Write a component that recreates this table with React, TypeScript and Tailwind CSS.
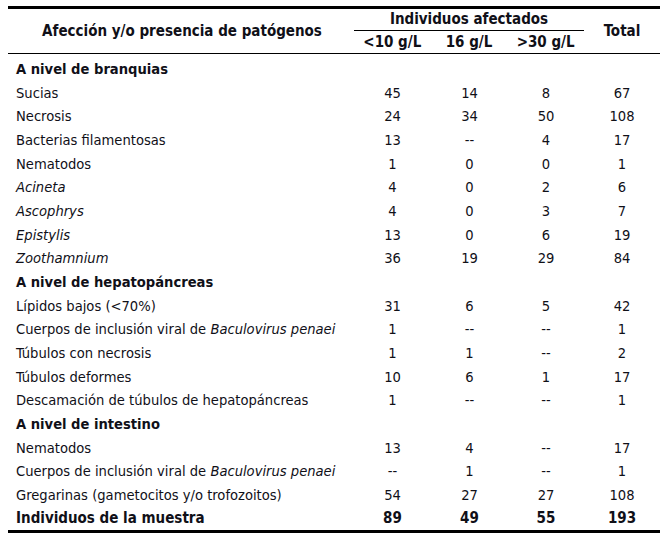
import React from "react";

type Row =
  | { kind: "section"; label: string }
  | { kind: "data"; label: React.ReactNode; v: string[]; bold?: boolean };

const rows: Row[] = [
  { kind: "section", label: "A nivel de branquias" },
  { kind: "data", label: "Sucias", v: ["45", "14", "8", "67"] },
  { kind: "data", label: "Necrosis", v: ["24", "34", "50", "108"] },
  { kind: "data", label: "Bacterias filamentosas", v: ["13", "--", "4", "17"] },
  { kind: "data", label: "Nematodos", v: ["1", "0", "0", "1"] },
  { kind: "data", label: <i>Acineta</i>, v: ["4", "0", "2", "6"] },
  { kind: "data", label: <i>Ascophrys</i>, v: ["4", "0", "3", "7"] },
  { kind: "data", label: <i>Epistylis</i>, v: ["13", "0", "6", "19"] },
  { kind: "data", label: <i>Zoothamnium</i>, v: ["36", "19", "29", "84"] },
  { kind: "section", label: "A nivel de hepatopáncreas" },
  { kind: "data", label: "Lípidos bajos (<70%)", v: ["31", "6", "5", "42"] },
  {
    kind: "data",
    label: (
      <>
        Cuerpos de inclusión viral de <i>Baculovirus penaei</i>
      </>
    ),
    v: ["1", "--", "--", "1"],
  },
  { kind: "data", label: "Túbulos con necrosis", v: ["1", "1", "--", "2"] },
  { kind: "data", label: "Túbulos deformes", v: ["10", "6", "1", "17"] },
  { kind: "data", label: "Descamación de túbulos de hepatopáncreas", v: ["1", "--", "--", "1"] },
  { kind: "section", label: "A nivel de intestino" },
  { kind: "data", label: "Nematodos", v: ["13", "4", "--", "17"] },
  {
    kind: "data",
    label: (
      <>
        Cuerpos de inclusión viral de <i>Baculovirus penaei</i>
      </>
    ),
    v: ["--", "1", "--", "1"],
  },
  { kind: "data", label: "Gregarinas (gametocitos y/o trofozoitos)", v: ["54", "27", "27", "108"] },
  { kind: "data", label: "Individuos de la muestra", v: ["89", "49", "55", "193"], bold: true },
];

const grid = "grid grid-cols-[346px_77px_77px_76px_76px]";

export default function App() {
  return (
    <div
      className="w-[671px] h-[543px] bg-white pt-[6px] pl-[8px] text-[14.6px] text-[#101018] [font-stretch:condensed]"
      style={{ fontFamily: '"DejaVu Sans Condensed", "DejaVu Sans", sans-serif' }}
    >
      <div className="w-[652px] border-t-[3px] border-b-[3px] border-black">
        {/* header */}
        <div className={`${grid} h-[45px] border-b border-black font-bold text-[15px]`}>
          <div className="flex items-center justify-center pl-[2px]">Afección y/o presencia de patógenos</div>
          <div className="col-span-3 flex flex-col">
            <div className="h-[22px] flex items-center justify-center border-b border-black">
              Individuos afectados
            </div>
            <div className="grid grid-cols-3 flex-1">
              <div className="flex items-center justify-center">&lt;10 g/L</div>
              <div className="flex items-center justify-center">16 g/L</div>
              <div className="flex items-center justify-center">&gt;30 g/L</div>
            </div>
          </div>
          <div className="flex items-center justify-center">Total</div>
        </div>
        {/* body */}
        <div className="pt-[3px]">
          {rows.map((r, i) =>
            r.kind === "section" ? (
              <div key={i} className="h-[23.68px] flex items-center pl-[8px] font-bold">
                {r.label}
              </div>
            ) : (
              <div key={i} className={`${grid} h-[23.68px] items-center ${r.bold ? "font-bold text-[15px]" : ""}`}>
                <div className="pl-[8px] whitespace-nowrap">{r.label}</div>
                {r.v.map((x, j) => (
                  <div key={j} className="text-center">
                    {x}
                  </div>
                ))}
              </div>
            )
          )}
        </div>
      </div>
    </div>
  );
}
